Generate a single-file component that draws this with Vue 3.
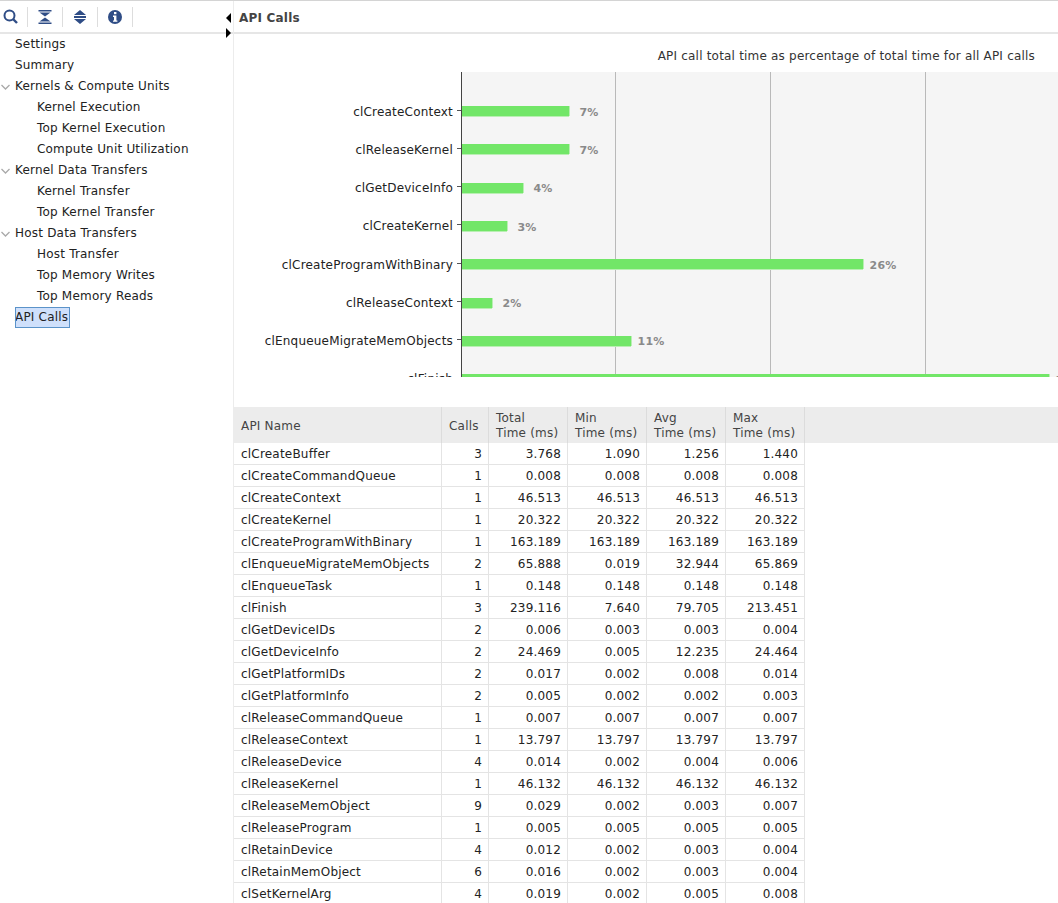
<script setup>
const tree = [
  { label: 'Settings', level: 0 },
  { label: 'Summary', level: 0 },
  { label: 'Kernels & Compute Units', level: 0, open: true },
  { label: 'Kernel Execution', level: 1 },
  { label: 'Top Kernel Execution', level: 1 },
  { label: 'Compute Unit Utilization', level: 1 },
  { label: 'Kernel Data Transfers', level: 0, open: true },
  { label: 'Kernel Transfer', level: 1 },
  { label: 'Top Kernel Transfer', level: 1 },
  { label: 'Host Data Transfers', level: 0, open: true },
  { label: 'Host Transfer', level: 1 },
  { label: 'Top Memory Writes', level: 1 },
  { label: 'Top Memory Reads', level: 1 },
  { label: 'API Calls', level: 0, selected: true }
]

const bars = [
  { name: 'clCreateContext', width: 107, pct: '7%' },
  { name: 'clReleaseKernel', width: 107, pct: '7%' },
  { name: 'clGetDeviceInfo', width: 61, pct: '4%' },
  { name: 'clCreateKernel', width: 45, pct: '3%' },
  { name: 'clCreateProgramWithBinary', width: 401, pct: '26%' },
  { name: 'clReleaseContext', width: 30, pct: '2%' },
  { name: 'clEnqueueMigrateMemObjects', width: 169, pct: '11%' },
  { name: 'clFinish', width: 587, pct: '38%' }
]

const rows = [
  ['clCreateBuffer', 3, '3.768', '1.090', '1.256', '1.440'],
  ['clCreateCommandQueue', 1, '0.008', '0.008', '0.008', '0.008'],
  ['clCreateContext', 1, '46.513', '46.513', '46.513', '46.513'],
  ['clCreateKernel', 1, '20.322', '20.322', '20.322', '20.322'],
  ['clCreateProgramWithBinary', 1, '163.189', '163.189', '163.189', '163.189'],
  ['clEnqueueMigrateMemObjects', 2, '65.888', '0.019', '32.944', '65.869'],
  ['clEnqueueTask', 1, '0.148', '0.148', '0.148', '0.148'],
  ['clFinish', 3, '239.116', '7.640', '79.705', '213.451'],
  ['clGetDeviceIDs', 2, '0.006', '0.003', '0.003', '0.004'],
  ['clGetDeviceInfo', 2, '24.469', '0.005', '12.235', '24.464'],
  ['clGetPlatformIDs', 2, '0.017', '0.002', '0.008', '0.014'],
  ['clGetPlatformInfo', 2, '0.005', '0.002', '0.002', '0.003'],
  ['clReleaseCommandQueue', 1, '0.007', '0.007', '0.007', '0.007'],
  ['clReleaseContext', 1, '13.797', '13.797', '13.797', '13.797'],
  ['clReleaseDevice', 4, '0.014', '0.002', '0.004', '0.006'],
  ['clReleaseKernel', 1, '46.132', '46.132', '46.132', '46.132'],
  ['clReleaseMemObject', 9, '0.029', '0.002', '0.003', '0.007'],
  ['clReleaseProgram', 1, '0.005', '0.005', '0.005', '0.005'],
  ['clRetainDevice', 4, '0.012', '0.002', '0.003', '0.004'],
  ['clRetainMemObject', 6, '0.016', '0.002', '0.003', '0.004'],
  ['clSetKernelArg', 4, '0.019', '0.002', '0.005', '0.008']
]
</script>

<template>
  <div class="app">
    <aside class="sidebar">
      <div class="toolbar">
        <button class="tool">
          <svg width="16" height="16" viewBox="0 0 16 16">
            <circle cx="6.5" cy="6.5" r="5" fill="none" stroke="#2f4d86" stroke-width="2" />
            <path d="M10 10 L14 14" stroke="#2f4d86" stroke-width="2.4" />
          </svg>
        </button>
        <span class="tool-sep"></span>
        <button class="tool">
          <svg width="16" height="16" viewBox="0 0 16 16" fill="#2f4d86">
            <path d="M0.5 1 H13.5 V2.5 H0.5 Z M1.5 3.5 H12.5 L7 7.5 Z M1.5 12.5 H12.5 L7 8.5 Z M0.5 13.5 H13.5 V15 H0.5 Z" />
          </svg>
        </button>
        <span class="tool-sep"></span>
        <button class="tool">
          <svg width="16" height="16" viewBox="0 0 16 16" fill="#2f4d86">
            <path d="M7 1 L13 6 H1 Z M1 10 H13 L7 15 Z" />
            <rect x="1" y="7" width="12" height="2" />
          </svg>
        </button>
        <span class="tool-sep"></span>
        <button class="tool">
          <svg width="16" height="16" viewBox="0 0 16 16">
            <circle cx="7" cy="8" r="7" fill="#2f4d86" />
            <rect x="6" y="3" width="2.4" height="2.2" fill="#fff" />
            <path d="M5 6.6 H8.4 V11.4 H9.4 V12.8 H5 V11.4 H6 V8 H5 Z" fill="#fff" />
          </svg>
        </button>
        <span class="tool-sep"></span>
      </div>
      <ul class="tree">
        <li v-for="item in tree" :key="item.label" class="tree-item" :class="{ child: item.level === 1 }">
          <svg v-if="item.open" class="chevron" width="9" height="6" viewBox="0 0 9 6">
            <path d="M0.5 1 L4.5 5 L8.5 1" fill="none" stroke="#a9a9a9" stroke-width="1.3" />
          </svg>
          <span class="tree-label" :class="{ selected: item.selected }">{{ item.label }}</span>
        </li>
      </ul>
    </aside>

    <main class="content">
      <header class="panel-head">
        <h1>API Calls</h1>
        <div class="arrows">
          <span class="arrow-left"></span>
          <span class="arrow-right"></span>
        </div>
      </header>

      <section class="chart">
        <p class="chart-title">API call total time as percentage of total time for all API calls</p>
        <div class="chart-body">
          <div class="labels">
            <div v-for="bar in bars" :key="bar.name" class="label-row">
              <span>{{ bar.name }}</span>
              <i class="tick"></i>
            </div>
          </div>
          <div class="plot">
            <i class="grid g1"></i>
            <i class="grid g2"></i>
            <i class="grid g3"></i>
            <div v-for="bar in bars" :key="bar.name" class="bar-row">
              <span class="bar" :style="{ width: bar.width + 'px' }"></span>
              <span class="pct">{{ bar.pct }}</span>
            </div>
          </div>
        </div>
      </section>

      <table class="grid-table">
        <thead>
          <tr>
            <th class="col-name">API Name</th>
            <th class="col-calls">Calls</th>
            <th class="col-time">Total<br />Time (ms)</th>
            <th class="col-time">Min<br />Time (ms)</th>
            <th class="col-time">Avg<br />Time (ms)</th>
            <th class="col-time">Max<br />Time (ms)</th>
            <th class="col-fill"></th>
          </tr>
        </thead>
        <tbody>
          <tr v-for="row in rows" :key="row[0]">
            <td class="name">{{ row[0] }}</td>
            <td v-for="(cell, i) in row.slice(1)" :key="i" class="num">{{ cell }}</td>
          </tr>
        </tbody>
      </table>
    </main>
  </div>
</template>

<style>
html, body {
  margin: 0;
  background: #fff;
  overflow: hidden;
}
</style>

<style scoped>
.app {
  display: flex;
  width: 1058px;
  height: 903px;
  overflow: hidden;
  font-family: "DejaVu Sans", sans-serif;
  font-size: 12px;
  letter-spacing: 0.2px;
  color: #222;
  border-top: 1px solid #d4d4d4;
  box-sizing: border-box;
}

.sidebar {
  width: 234px;
  flex: none;
  box-sizing: border-box;
  border-right: 1px solid #ececec;
}

.toolbar {
  height: 31px;
  border-bottom: 2px solid #e6e6e6;
  display: flex;
  align-items: center;
  padding-left: 3px;
}

.tool {
  width: 16px;
  height: 16px;
  margin: 0 8px 0 0;
  padding: 0;
  border: none;
  background: none;
  display: block;
}

.tool-sep {
  width: 1px;
  height: 20px;
  background: #ddd;
  margin-right: 10px;
}

.tree {
  list-style: none;
  margin: 0;
  padding: 0;
}

.tree-item {
  height: 21px;
  line-height: 21px;
  padding-left: 15px;
  position: relative;
  white-space: nowrap;
}

.tree-item.child {
  padding-left: 37px;
}

.chevron {
  position: absolute;
  left: 1px;
  top: 8px;
}

.tree-label {
  display: inline-block;
}

.tree-label.selected {
  background: #cfe0fb;
  outline: 1px solid #5b93c9;
  outline-offset: -1px;
  height: 21px;
  line-height: 21px;
  padding-right: 2px;
}

.content {
  flex: 1;
  min-width: 0;
}

.panel-head {
  height: 29px;
  border-bottom: 2px solid #e6e6e6;
  display: flex;
  align-items: center;
  padding: 2px 0 0 5px;
  position: relative;
}

.panel-head h1 {
  margin: 0;
  font-size: 12px;
  font-weight: 700;
  color: #444;
}

.arrows {
  position: absolute;
  left: -8px;
  top: 12px;
}

.arrow-left,
.arrow-right {
  position: absolute;
  width: 0;
  height: 0;
  border-top: 5px solid transparent;
  border-bottom: 5px solid transparent;
}

.arrow-left {
  left: 0;
  top: 0;
  border-right: 5px solid #000;
}

.arrow-right {
  left: 0;
  top: 15px;
  border-left: 5px solid #000;
}

.chart {
  height: 373px;
  overflow: hidden;
}

.chart-title {
  margin: 0;
  height: 38px;
  padding-top: 14px;
  box-sizing: border-box;
  padding-right: 23px;
  text-align: right;
  line-height: 16px;
  color: #333;
}

.chart-body {
  display: flex;
  height: 305px;
  overflow: hidden;
}

.labels {
  width: 227px;
  flex: none;
  padding-top: 21px;
}

.label-row {
  height: 38.14px;
  display: flex;
  justify-content: flex-end;
  align-items: center;
  line-height: 38px;
}

.tick {
  width: 4px;
  height: 1px;
  background: #555;
  margin: 0 0 3px 4px;
}

.plot {
  flex: 1;
  position: relative;
  background: #f5f5f5;
  border-left: 1px solid #444;
  padding-top: 20px;
}

.grid {
  position: absolute;
  top: 0;
  bottom: 0;
  width: 1px;
  background: #b9b9b9;
}

.g1 { left: 153px; }
.g2 { left: 308px; }
.g3 { left: 463px; }

.bar-row {
  height: 38.3px;
  display: flex;
  align-items: center;
  position: relative;
}

.bar {
  height: 10px;
  background: #72e668;
  display: block;
  box-shadow: 1px 0 0 #b9efb3, 0 1px 0 #b9efb3;
}

/* label box is centred 20px past the end of the bar */
.pct {
  width: 40px;
  flex: none;
  text-align: center;
  font-size: 11px;
  font-weight: 700;
  color: #8a8a8a;
  padding-top: 2px;
}

.grid-table {
  border-collapse: separate;
  border-spacing: 0;
  table-layout: fixed;
  width: 824px;
}

.grid-table th {
  height: 36px;
  padding: 2px 6px 0 7px;
  box-sizing: border-box;
  background: #ececec;
  border-right: 1px solid #dcdcdc;
  font-weight: 400;
  text-align: left;
  line-height: 15px;
  color: #444;
}

.col-name { width: 208px; }
.col-calls { width: 47px; }
.col-time { width: 79px; }

.grid-table th.col-fill {
  border-right: none;
}

.grid-table td {
  height: 22px;
  padding: 0 6px 0 7px;
  box-sizing: border-box;
  border-right: 1px solid #e4e4e4;
  border-bottom: 1px solid #e4e4e4;
  white-space: nowrap;
}

.num {
  text-align: right;
}
</style>
